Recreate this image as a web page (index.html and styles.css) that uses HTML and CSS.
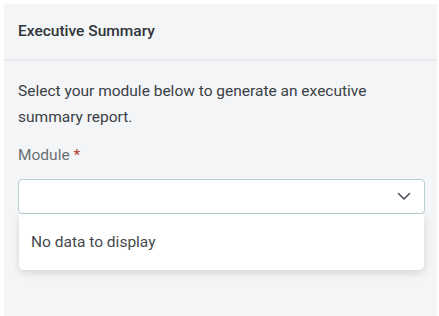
FILE: index.html
```html
<!DOCTYPE html>
<html>
<head>
<meta charset="utf-8">
<link rel="stylesheet" href="styles.css">
</head>
<body>
<div class="panel">
  <div class="header">Executive Summary</div>
  <div class="content">
    <p class="intro">Select your module below to generate an executive summary report.</p>
    <div class="label">Module <span class="req">*</span></div>
    <div class="field">
      <div class="select">
        <svg class="chev" width="14" height="9" viewBox="0 0 14 9"><path d="M1.5 1.5 L7 7 L12.5 1.5" fill="none" stroke="#4a5058" stroke-width="1.6" stroke-linecap="round" stroke-linejoin="round"/></svg>
      </div>
      <div class="menu">No data to display</div>
    </div>
  </div>
</div>
</body>
</html>
```
FILE: styles.css
```css
html, body { margin: 0; padding: 0; background: #fff; }
body { padding: 4px 2px 0 4px; height: 316px; box-sizing: border-box; overflow: hidden; font-family: Roboto, "Liberation Sans", sans-serif; }
.panel { background: #f4f5f7; height: 100%; }
.header { height: 56px; box-sizing: border-box; padding: 0 14px 2px; display: flex; align-items: center; font-size: 15.5px; font-weight: 500; color: #2f3438; border-bottom: 1px solid #e3e5e8; box-shadow: 0 1px 2px rgba(0,0,0,0.04); }
.content { padding: 18px 12px 0 14px; }
.intro { margin: 0; font-size: 15.5px; line-height: 26px; color: #3b4045; }
.label { margin-top: 15px; font-size: 15.5px; line-height: 20px; color: #6b6f73; }
.req { color: #b03a2e; }
.field { margin-top: 14px; }
.select { height: 35px; box-sizing: border-box; border: 1px solid #b5ced2; border-radius: 4px; background: #fff; display: flex; align-items: center; justify-content: flex-end; padding-right: 13px; }
.menu { margin: 0 1px; height: 56px; box-sizing: border-box; background: #fff; border-radius: 0 0 5px 5px; box-shadow: 0 3px 8px rgba(0,0,0,0.13); display: flex; align-items: center; padding-left: 12px; font-size: 15.5px; color: #45494d; }
```
